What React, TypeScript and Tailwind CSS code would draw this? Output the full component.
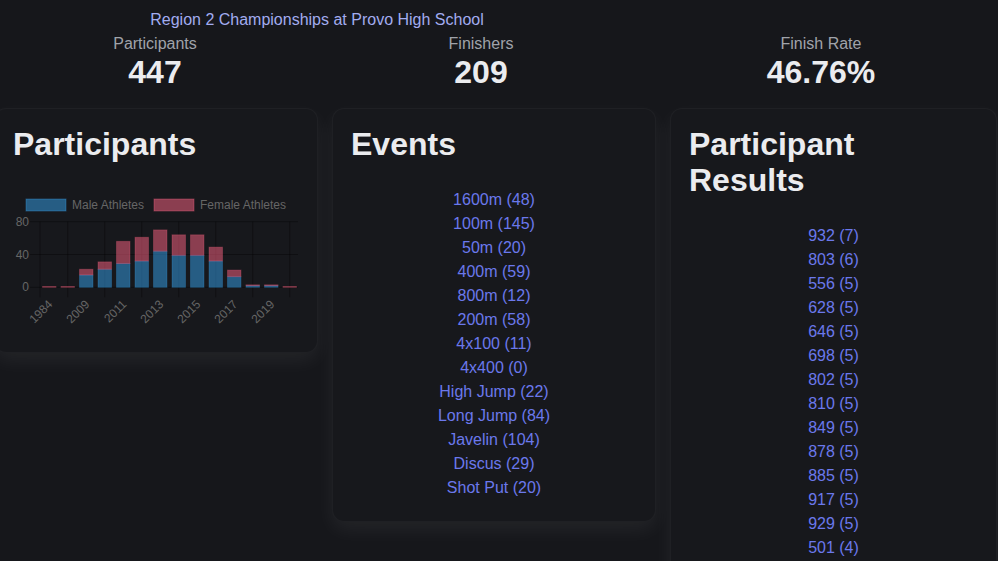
import React from "react";

const events = [
  "1600m (48)",
  "100m (145)",
  "50m (20)",
  "400m (59)",
  "800m (12)",
  "200m (58)",
  "4x100 (11)",
  "4x400 (0)",
  "High Jump (22)",
  "Long Jump (84)",
  "Javelin (104)",
  "Discus (29)",
  "Shot Put (20)",
];

const results = [
  "932 (7)",
  "803 (6)",
  "556 (5)",
  "628 (5)",
  "646 (5)",
  "698 (5)",
  "802 (5)",
  "810 (5)",
  "849 (5)",
  "878 (5)",
  "885 (5)",
  "917 (5)",
  "929 (5)",
  "501 (4)",
  "536 (4)",
  "611 (4)",
  "733 (4)",
];

// participants per year, split by gender
const years = ["1984", "2008", "2009", "2010", "2011", "2012", "2013", "2014", "2015", "2016", "2017", "2018", "2019", "2020"];
const male = [0, 0, 15, 22, 29, 32, 44, 39, 39, 32, 13, 2, 2, 0];
const female = [1, 1, 7, 9, 27, 29, 26, 25, 25, 17, 8, 1, 1, 1];

const FONT = { fontFamily: '"Liberation Sans", Arial, sans-serif' };

function ParticipantsChart() {
  const left = 26;
  const step = 18.5;
  const barW = 13.5;
  const y0 = 97.3;
  const k = 0.82;
  const y = (v: number) => y0 - v * k;
  const gridX = [26, 53.75, 90.75, 127.75, 164.75, 201.75, 238.75, 275.75];
  const grid = "rgba(0,0,0,0.35)";
  return (
    <svg width="284" height="144" className="block" style={FONT}>
      {/* legend */}
      <rect x="12" y="9" width="40" height="12" fill="rgba(54,162,235,0.5)" stroke="rgba(54,162,235,0.35)" />
      <text x="58" y="19" fontSize="12" fill="#666">Male Athletes</text>
      <rect x="140" y="9" width="40" height="12" fill="rgba(255,99,132,0.5)" stroke="rgba(255,99,132,0.35)" />
      <text x="186" y="19" fontSize="12" fill="#666">Female Athletes</text>

      {/* grid */}
      {[80, 40, 0].map((v) => (
        <line key={v} x1={left - 10} x2={285} y1={y(v)} y2={y(v)} stroke={grid} strokeWidth="1" />
      ))}
      {gridX.map((gx) => (
        <line key={gx} x1={gx} x2={gx} y1={y(80)} y2={y0 + 10} stroke={grid} strokeWidth="1" />
      ))}

      {/* y ticks */}
      {[80, 40, 0].map((v) => (
        <text key={v} x="15" y={y(v) + 4} fontSize="12" fill="#666" textAnchor="end">
          {v}
        </text>
      ))}

      {/* stacked bars */}
      {years.map((yr, i) => {
        const cx = left + step * (i + 0.5);
        const x = cx - barW / 2;
        const m = male[i];
        const f = female[i];
        return (
          <g key={yr}>
            {m > 0 && (
              <rect x={x} y={y(m)} width={barW} height={m * k} fill="rgba(54,162,235,0.5)" stroke="rgba(54,162,235,0.25)" strokeWidth="1" />
            )}
            {f > 0 && (
              <rect x={x} y={y(m + f)} width={barW} height={f * k} fill="rgba(255,99,132,0.5)" stroke="rgba(255,99,132,0.25)" strokeWidth="1" />
            )}
          </g>
        );
      })}

      {/* x ticks */}
      {years.map((yr, i) =>
        i % 2 === 0 ? (
          <text
            key={yr}
            x={left + step * (i + 0.5) + 4}
            y={115}
            fontSize="12"
            fill="#666"
            textAnchor="end"
            transform={`rotate(-45 ${left + step * (i + 0.5) + 4} 115)`}
          >
            {yr}
          </text>
        ) : null
      )}
    </svg>
  );
}

function Card({ className = "", children }: { className?: string; children: React.ReactNode }) {
  return (
    <div
      className={`rounded-[12px] border border-white/[0.035] bg-[#17181c] px-[19px] pt-[17px] shadow-[0_8px_20px_rgba(255,255,255,0.06)] ${className}`}
    >
      {children}
    </div>
  );
}

export default function App() {
  return (
    <div className="min-h-screen overflow-hidden bg-[#16171b] text-[#e8e9ec]" style={FONT}>
      <div className="ml-[-6px] grid w-[1004px] grid-cols-[322px_330px_350px] pt-[8px] text-center">
        <div className="col-span-2 pr-[6px] text-[16px] leading-6 text-[#a2acf0]">
          Region 2 Championships at Provo High School
        </div>
        <div />
        {[
          ["Participants", "447"],
          ["Finishers", "209"],
          ["Finish Rate", "46.76%"],
        ].map(([label, value]) => (
          <div key={label} className="mt-[1px] flex flex-col items-center">
            <div className="text-[16px] leading-[22px] text-[#a0a3aa]">{label}</div>
            <div className="mt-[1px] text-[32px] font-bold leading-[32px] text-[#ebecef]">{value}</div>
          </div>
        ))}
      </div>

      <div className="ml-[-6px] mt-[20px] flex items-start gap-[14px]">
        <Card className="w-[324px] pb-[18px]">
          <h2 className="ml-[-1px] text-[32px] font-bold leading-[36px] text-[#ebecef]">Participants</h2>
          <div className="mt-[28px]">
            <ParticipantsChart />
          </div>
        </Card>

        <Card className="w-[324px] pb-[21px]">
          <h2 className="ml-[-1px] text-[32px] font-bold leading-[36px] text-[#ebecef]">Events</h2>
          <ul className="mt-[26px] flex flex-col items-center">
            {events.map((e) => (
              <li key={e} className="text-[16px] leading-6 text-[#6b78ec]">
                {e}
              </li>
            ))}
          </ul>
        </Card>

        <Card className="w-[327px] pb-5">
          <h2 className="ml-[-1px] text-[32px] font-bold leading-[36px] text-[#ebecef]">
            Participant
            <br />
            Results
          </h2>
          <ul className="mt-[26px] flex flex-col items-center">
            {results.map((r) => (
              <li key={r} className="text-[16px] leading-6 text-[#6b78ec]">
                {r}
              </li>
            ))}
          </ul>
        </Card>
      </div>
    </div>
  );
}
